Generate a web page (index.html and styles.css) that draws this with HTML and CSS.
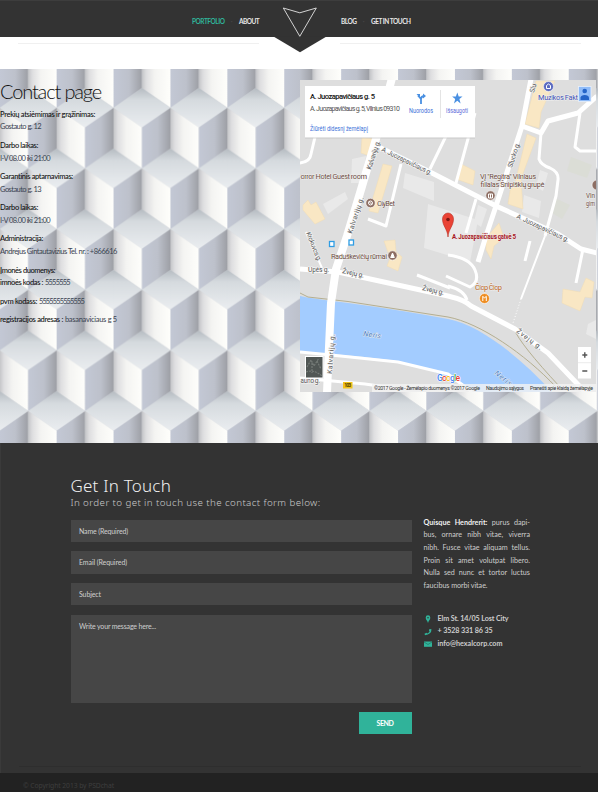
FILE: index.html
```html
<!DOCTYPE html>
<html lang="lt">
<head>
<meta charset="utf-8">
<title>Contact page</title>
<link rel="stylesheet" href="styles.css">
</head>
<body>
<header class="top">
  <nav class="nav nav-left"><a class="active" data-w="32.5">PORTFOLIO</a><i>·</i><a data-w="20">ABOUT</a></nav>
  <nav class="nav nav-right"><a data-w="15.5">BLOG</a><i>·</i><a data-w="39.5">GET IN TOUCH</a></nav>
  <svg class="logo" width="54" height="53" viewBox="273 0 54 53"><path d="M273.5 36.5H326.5L300 52.3Z" fill="#333"/><path d="M283.3 8L299.8 12.8L316.3 8L299.8 36.3Z" fill="none" stroke="#e4e4e4" stroke-width=".9"/></svg>
</header>
<div class="rules"><hr><hr></div>

<main class="contact">
  <svg class="cubes" width="598" height="374" viewBox="0 69 598 374">
    <defs>
      <linearGradient id="gl" x1="0" x2="1" y1="0" y2="0"><stop offset="0" stop-color="#c4c5c8"/><stop offset=".15" stop-color="#dedee0"/><stop offset=".45" stop-color="#f4f4f2"/><stop offset="1" stop-color="#fefefb"/></linearGradient>
      <linearGradient id="gr" x1="0" x2="1" y1="0" y2="0"><stop offset="0" stop-color="#c3c8d5"/><stop offset=".55" stop-color="#bdc1cb"/><stop offset="1" stop-color="#9d9fa5"/></linearGradient>
      <linearGradient id="gt" x1="0" x2="0" y1="0" y2="1"><stop offset="0" stop-color="#b5bbc1"/><stop offset=".3" stop-color="#d5dade"/><stop offset="1" stop-color="#eaedf0"/></linearGradient>
      <g id="cube">
        <path d="M0 0L28.45 20L0 39.6L-28.45 20Z" fill="url(#gt)"/>
        <path d="M-28.45 20L0 39.6V80.4L-28.45 60.6Z" fill="url(#gl)"/>
        <path d="M28.45 20L0 39.6V80.4L28.45 60.6Z" fill="url(#gr)"/>
      </g>
      <pattern id="tile" x="-.25" y="88" width="56.9" height="121.3" patternUnits="userSpaceOnUse">
        <rect width="56.9" height="121.3" fill="#d0d3d9"/>
        <use href="#cube" x="0" y="-60.65"/><use href="#cube" x="56.9" y="-60.65"/>
        <use href="#cube" x="28.45" y="0"/>
        <use href="#cube" x="0" y="60.65"/><use href="#cube" x="56.9" y="60.65"/>
        <use href="#cube" x="28.45" y="121.3"/>
      </pattern>
    </defs>
    <rect y="69" width="598" height="374" fill="url(#tile)"/>
  </svg>
  <section class="info">
    <h1><span data-w="101">Contact page</span></h1>
    <p><b data-w="95">Prekių atsiėmimas ir grąžinimas:</b><br><span data-w="41">Gostauto g. 12</span></p>
    <p><b data-w="38">Darbo laikas:</b><br><span data-w="50">I-V 08.00 iki 21:00</span></p>
    <p><b data-w="73">Garantinis aptarnavimas:</b><br><span data-w="41">Gostauto g. 13</span></p>
    <p><b data-w="38">Darbo laikas:</b><br><span data-w="50">I-V 08.00 iki 21:00</span></p>
    <p><b data-w="43">Administracija:</b><br><span data-w="117">Andrejus Gintautavizius Tel. nr. : +866616</span></p>
    <p><b data-w="55">Įmonės duomenys:</b><br><b data-w="43">imnoės kodas :</b> <span data-w="25">5555555</span></p>
    <p><b data-w="37">pvm kodass:</b> <span data-w="45">5555555555555</span></p>
    <p><b data-w="63">registracijos adresas :</b> <span data-w="52">basanaviciaus g 5</span></p>
  </section>
  <svg class="map" width="296" height="312" viewBox="300 80 296 312">
    <rect x="300" y="80" width="296" height="312" fill="#dedede"/>
    <g fill="#e9e9e9">
      <path d="M405 173L434 182V201L403 188ZM323 204L345 192L348 199L328 214ZM352 159L366 156L361 183L351 183ZM428 204L478 220L470 262L424 248ZM478 205L487 209L481 227L474 222ZM540 170L548 173L543 191L536 187ZM524 195L541 201L539 218L522 212ZM588 324L596 320V339L586 334ZM389 88L400 92L396 103L386 98Z"/>
      <path d="M571 157L592 165L587 178L567 171ZM555 198L570 205L562 219L552 213Z" fill="#dbddd6"/>
    </g>
    <g fill="#f9e7c4" stroke="#f0dcb4" stroke-width=".5">
      <path d="M362 137L376 139L370 156L361 153ZM383 164L392 166L378 213L369 211ZM303 205L308 200L311 205L316 202L325 219L315 224L303 210ZM536 81H555L541 112L539 128L525 124ZM527 134L536 138L521 179L523 209L508 204L511 185L515 183ZM461 164L475 171L473 185L456 179ZM486 238L499 223L504 238L494 246L491 259L486 250ZM563 289L580 292L586 278L594 282L592 298L585 297L580 311L562 303ZM384 241L395 240L396 252L402 257L398 271L387 266L390 258Z"/>
    </g>
    <path d="M300 296Q308 298 348 303Q400 310 448 319C480 325 520 357 552 392H476Q455 376 398 361Q360 356 331 354L300 351Z" fill="#a3ccff"/>
    <g fill="none" stroke="#b5af91" stroke-width="1">
      <path d="M300 293L308 297L348 301.500L448 317C480 323 525 354 556 387M514 329Q520 344 560 387"/>
    </g>
    <g fill="none" stroke="#fff" stroke-linejoin="round">
      <path stroke-width="8" d="M392 78L376 139L360 193L347 236L336 269L331 303L328 369L327 393"/>
      <path stroke-width="5" d="M372 144L385 150L430 172L496 206L558 234L581 249L597 253M531 79L522 126L496 206L486 236L478 262M522 126L541 133L548 121L578 113L597 96M300 269L338 272L448 296Q465 300 471 306L515 329L548 353L586 393"/>
      <path stroke-width="3" d="M541 133L539 159Q541 165 550 168Q559 172 558 180L556 196L545 236M580 113L575 147L580 151L597 151M300 163Q310 162 311 154L315 137M300 352L331 355L398 362L448 374L472 392M300 378L365 384L400 389M583 249L576 283M530 241L525 261M417 275L450 288M368 219L386 226L401 164M430 169L446 136M475 113L456 183M476 199L466 233M448 255Q470 258 475 270Q480 282 470 287L446 276M448 286Q464 290 467 300"/>
      <path stroke-width="2" d="M545 236L521 299M306 232L322 268"/>
      <path stroke-width="1" stroke-dasharray="1 2" d="M521 299L513 323"/>
    </g>
    <g class="road">
      <text textLength="30" transform="translate(371 170) rotate(-72)">Kalvarijų g.</text>
      <text textLength="38" transform="translate(352 234) rotate(-72)">Kalvarijų g.</text>
      <text textLength="40" transform="translate(332 374) rotate(-86)">Kalvarijų g.</text>
      <text textLength="55" transform="translate(381 151) rotate(26)">A. Juozapavičiaus g.</text>
      <text textLength="57" transform="translate(516 218) rotate(25)">A. Juozapavičiaus g.</text>
      <text textLength="26" transform="translate(512 168) rotate(-72)">Slucko g.</text>
      <text textLength="9" transform="translate(534 93) rotate(-74)">Slu</text>
      <text textLength="31" transform="translate(306 233) rotate(68)">Krokuvos g.</text>
      <text x="308" y="272" textLength="21">Upės g.</text>
      <text textLength="22" transform="translate(342 273) rotate(12)">Žvejų g.</text>
      <text textLength="22" transform="translate(422 290) rotate(13)">Žvejų g.</text>
      <text textLength="30" transform="translate(516 332) rotate(37)">Žvejų g.</text>
      <text x="300.500" y="383" textLength="19.500">auno g.</text>
    </g>
    <g class="poi">
      <text x="300.500" y="179" textLength="66.500">orror Hotel Guest room</text>
      <text x="377" y="206" textLength="18">OlyBet</text>
      <text x="331" y="259" textLength="56">Raduškevičių rūmai</text>
      <text x="480" y="179" textLength="56">VĮ "Regitra" Vilniaus</text>
      <text x="480" y="187" textLength="64">filialas Šnipiškių grupė</text>
      <text x="586" y="198" textLength="9" lengthAdjust="spacingAndGlyphs">Vln</text><text x="586" y="206" textLength="9" lengthAdjust="spacingAndGlyphs">gim</text>
      <text x="475" y="290" textLength="27" fill="#b8631b">Čiop Čiop</text>
      <text x="538" y="100" textLength="40" fill="#3f51b5">Muzikos Fakt</text>
      <text x="363" y="336" textLength="18" fill="#4a7fc6" font-style="italic" transform="rotate(8 363 336)">Neris</text>
      <text x="494" y="374" textLength="20" fill="#4a7fc6" font-style="italic" transform="rotate(38 494 374)">Neris</text>
    </g>
    <g stroke="#fff" stroke-width=".6">
      <g fill="#8d6e63"><circle cx="370.500" cy="203" r="4.700"/><circle cx="392.500" cy="255.500" r="4.700"/><circle cx="490.500" cy="195.500" r="4.700"/><circle cx="597" cy="185" r="5"/></g>
      <circle cx="484.500" cy="298.500" r="5" fill="#ee8d22"/><circle cx="548.500" cy="86.500" r="5" fill="#5c6bc0"/>
    </g>
    <g fill="none" stroke="#fff" stroke-width="1">
      <circle cx="370.500" cy="203" r="2"/><path d="M369 201.500L372 204.500M488.500 194V198H492.500V194ZM490.500 194V198M482.800 301V296.300L484.500 298L486.300 296.300V301M546.500 85.500L548.500 84L550.500 85.500V88.500H546.500Z"/><path d="M390.700 257.500L392.500 253L394.300 257.500Z" fill="#fff"/>
    </g>
    <g fill="#fff" stroke="#2f9de4" stroke-width="1.300"><rect x="329.500" y="241.500" width="4.500" height="5"/><rect x="349" y="240" width="4.500" height="5"/></g>
    <path d="M448 237C447.500 229 442.500 226 442.500 219A5.500 6 0 0 1 453.500 219C453.500 226 448.500 229 448 237Z" fill="#ea4335" stroke="#b93227" stroke-width=".6"/><circle cx="448" cy="219.500" r="1.800" fill="#7c1712"/>
    <text class="pin" x="452" y="239" textLength="64">A. Juozapavičiaus gatvė 5</text>
    <rect x="305" y="86.500" width="170" height="52" fill="#bbb" opacity=".6"/><rect x="305" y="86" width="170" height="51.500" fill="#fff"/>
    <g class="card">
      <text x="310" y="99" textLength="65" class="addr">A. Juozapavičiaus g. 5</text>
      <text x="310" y="110.500" textLength="90" fill="#555">A. Juozapavičiaus g. 5, Vilnius 09310</text>
      <text x="310" y="130.500" textLength="58" fill="#3a70d8" lengthAdjust="spacingAndGlyphs">Žiūrėti didesnį žemėlapį</text>
      <text x="409" y="113" textLength="24" fill="#3a70d8" lengthAdjust="spacingAndGlyphs">Nuorodos</text>
      <text x="446" y="113" textLength="22" fill="#5a68d8" lengthAdjust="spacingAndGlyphs">Išsaugoti</text>
    </g>
    <path d="M440.500 90V118" stroke="#e4e4e4"/>
    <path d="M421 104V99L418 95.500M421 99Q421 96.500 424 96" fill="none" stroke="#4a90e2" stroke-width="1.800"/><path d="M416.500 94H420V97.500ZM423 93.500L426 96L423 98.500Z" fill="#4a90e2"/>
    <path d="M457.300 92.500L458.700 96.500H462.500L459.400 99L460.600 103.500L457.300 100.800L454 103.500L455.200 99L452.100 96.500H455.900Z" fill="#4a90e2"/>
    <rect x="578.500" y="86.500" width="12.500" height="15" fill="#90bcf8" stroke="#e8f0fc" stroke-width=".8"/><circle cx="584.700" cy="91" r="2.300" fill="#2464c8"/><path d="M580.500 100V97.500Q581 95 584.700 95Q588.500 95 589 97.500V100Z" fill="#2464c8"/>
    <rect x="578" y="347" width="13" height="31.500" fill="#fff"/><path d="M578 362.700H591" stroke="#ddd" stroke-width=".6"/><path d="M582.300 355H587.300M584.800 352.300V357.700M582.300 371H587.300" stroke="#555" stroke-width="1.400"/>
    <rect x="305.500" y="356.500" width="17.500" height="21.500" fill="#505654" stroke="#fff"/><path d="M307 367L311 360L314 366L319 358M306 372Q314 369 322 376M312 363V373M317 361L321 369" fill="none" stroke="#757b77" stroke-width="1.200" stroke-dasharray="2 1"/>
    <rect x="343" y="382" width="9.500" height="6.500" fill="#f2c21b"/><text x="344.200" y="387.300" font-size="5" font-weight="bold" fill="#574300" textLength="7">103</text>
    <rect x="372" y="384" width="224" height="8" fill="#f3f3f3" opacity=".8"/>
    <text x="437" y="380.500" font-size="8.500" textLength="23" class="google"><tspan fill="#4285f4">G</tspan><tspan fill="#ea4335">o</tspan><tspan fill="#fbbc05">o</tspan><tspan fill="#4285f4">g</tspan><tspan fill="#34a853">l</tspan><tspan fill="#ea4335">e</tspan></text>
    <g class="legal"><text x="374" y="389.700" textLength="106">©2017 Google - Žemėlapio duomenys ©2017 Google</text><text x="486" y="389.700" textLength="38">Naudojimo sąlygos</text><text x="530" y="389.700" textLength="63">Pranešti apie klaidą žemėlapyje</text></g>
  </svg>
</main>

<section class="touch">
  <h2><span data-w="100.500">Get In Touch</span></h2>
  <p class="lead"><span data-w="250">In order to get in touch use the contact form below:</span></p>
  <div class="cols">
    <form class="form">
      <div class="field"><span data-w="49">Name (Required)</span></div>
      <div class="field"><span data-w="48">Email (Required)</span></div>
      <div class="field"><span data-w="22">Subject</span></div>
      <div class="field area"><span data-w="77">Write your message here...</span></div>
      <div class="send"><span data-w="17">SEND</span></div>
    </form>
    <aside class="side">
      <div class="line"><b>Quisque</b><b>Hendrerit:</b><span>purus</span><span>dapi-</span></div>
      <div class="line"><span>bus,</span><span>ornare</span><span>nibh</span><span>vitae,</span><span>viverra</span></div>
      <div class="line"><span>nibh.</span><span>Fusce</span><span>vitae</span><span>aliquam</span><span>tellus.</span></div>
      <div class="line"><span>Proin</span><span>sit</span><span>amet</span><span>volutpat</span><span>libero.</span></div>
      <div class="line"><span>Nulla</span><span>sed</span><span>nunc</span><span>et</span><span>tortor</span><span>luctus</span></div>
      <div><span data-w="64">faucibus morbi vitae.</span></div>
      <ul>
        <li><svg width="8" height="8" viewBox="0 0 8 8"><path d="M4 8C3.500 6 1.700 4.800 1.700 2.800A2.300 2.500 0 0 1 6.300 2.800C6.300 4.800 4.500 6 4 8Z" fill="#30b39a"/><circle cx="4" cy="2.800" r=".8" fill="#333"/></svg><span data-w="71">Elm St. 14/05 Lost City</span></li>
        <li><svg width="8" height="8" viewBox="0 0 8 8"><path d="M5.500 1L7.500 1.300Q7.500 6.500 1 7.300L.5 5.700L2.500 4.800L3.300 5.500Q5.300 4.500 5.600 3.300L4.900 2.500Z" fill="#30b39a"/></svg><span data-w="55">+ 3528 331 86 35</span></li>
        <li><svg width="8" height="8" viewBox="0 0 8 8"><path d="M0 1.500H8V6.800H0Z" fill="#30b39a"/><path d="M0 2L4 4.500L8 2" fill="none" stroke="#24705f" stroke-width=".7"/></svg><span data-w="65">info@hexalcorp.com</span></li>
      </ul>
    </aside>
  </div>
  <hr>
</section>
<footer class="foot"><span data-w="91">© Copyright 2013 by PSDchat</span></footer>
<script src="fit.js"></script>
</body>
</html>
```
FILE: styles.css
```css
* { box-sizing: border-box; }
body { margin: 0; width: 598px; height: 792px; overflow: hidden; background: #fff; font-family: Lato, "Open Sans", sans-serif; }
h1, h2, p, ul { margin: 0; padding: 0; font-weight: 300; }
span[data-w], b[data-w], a[data-w] { white-space: nowrap; }

.top { position: relative; display: flex; height: 37px; background: #333; border-top: 1px solid #3d3d3d; }
.nav { display: flex; align-items: center; height: 40px; font-size: 6.5px; font-weight: 700; color: #e6e6e6; white-space: nowrap; }
.nav i { width: 14.5px; text-align: center; color: #444; font-style: normal; }
.nav .active { color: #30b39a; }
.nav-left { width: 341px; padding-left: 192px; }
.logo { position: absolute; left: 273px; top: -1px; }
.rules { display: flex; justify-content: space-between; height: 32px; padding: 6px 17px 0 18px; }
.rules hr { width: 241px; height: 1px; margin: 0; border: 0; background: #f0f0f0; }

.contact { position: relative; display: flex; height: 374px; }
.cubes { position: absolute; left: 0; top: 0; }
.info { position: relative; width: 300px; padding-top: 9px; font-size: 7.5px; line-height: 12.4px; color: #3a4350; white-space: nowrap; }
.info h1 { height: 31px; font: 300 20px/27px Lato, sans-serif; color: #111; }
.info p { margin-bottom: 6.3px; font-weight: 400; }
.info b { font-weight: 500; color: #111; }
.map { position: relative; margin-top: 11px; font-family: Roboto, sans-serif; }
.road text { font-size: 6.8px; fill: #555; stroke: #f4f4f4; stroke-width: 1.2px; paint-order: stroke; }
.poi { font-size: 7.5px; fill: #6d4c41; }
.poi text { stroke: #f0f0f0; stroke-width: .8px; paint-order: stroke; }
.pin { font-size: 6.3px; font-weight: 700; fill: #a3151d; stroke: #f0e4e4; stroke-width: .8px; paint-order: stroke; }
.card { font-size: 7px; }
.addr { font-size: 7.6px; font-weight: 500; fill: #111; }
.google { font-weight: 500; stroke: #fff; stroke-width: 1px; paint-order: stroke; }
.legal { font-size: 5.2px; fill: #333; }

.touch { height: 329.5px; padding: 32px 18px 0 69.5px; background: #333; border-left: 1px solid #3a3a3a; }
.touch h2 { height: 22.5px; font: 300 17px/22px "Noto Sans", "Open Sans", sans-serif; color: #f0f0f0; }
.lead { height: 22px; font: 300 9.8px/10px "Noto Sans", "Open Sans", sans-serif; color: #ccc; }
.cols { display: flex; gap: 12px; height: 246.5px; }
.form { display: flex; flex-direction: column; gap: 9.5px; width: 341px; }
.field { height: 22.3px; padding-left: 8.5px; background: #464646; font-size: 7px; line-height: 22px; color: #cfcfcf; }
.area { height: 88px; }
.send { align-self: flex-end; width: 53px; height: 22px; background: #30b39a; color: #fff; font-size: 7px; font-weight: 700; line-height: 22px; text-align: center; }
.side { width: 106.5px; margin-top: -3px; font-size: 7.2px; line-height: 12.7px; color: #ccc; }
.line { display: flex; justify-content: space-between; }
.line b { color: #f0f0f0; }
.side ul { margin-top: 20px; list-style: none; font-weight: 700; }
.side li { display: flex; align-items: center; gap: 6px; height: 12.7px; }
.touch > hr { height: 1px; width: 562px; margin: 0 0 0 -52px; border: 0; background: #2e2e2e; }
.foot { height: 19.5px; padding-left: 23px; background: #222; font: 6.8px/25px "Noto Sans", sans-serif; color: #3e3e3e; }
```
FILE: fit.js
```js
document.querySelectorAll('[data-w]').forEach(function (el) {
  el.style.display = 'inline-block';
  var target = parseFloat(el.dataset.w);
  var n = el.textContent.length;
  el.style.letterSpacing = (target - el.getBoundingClientRect().width) / n + 'px';
});
```
